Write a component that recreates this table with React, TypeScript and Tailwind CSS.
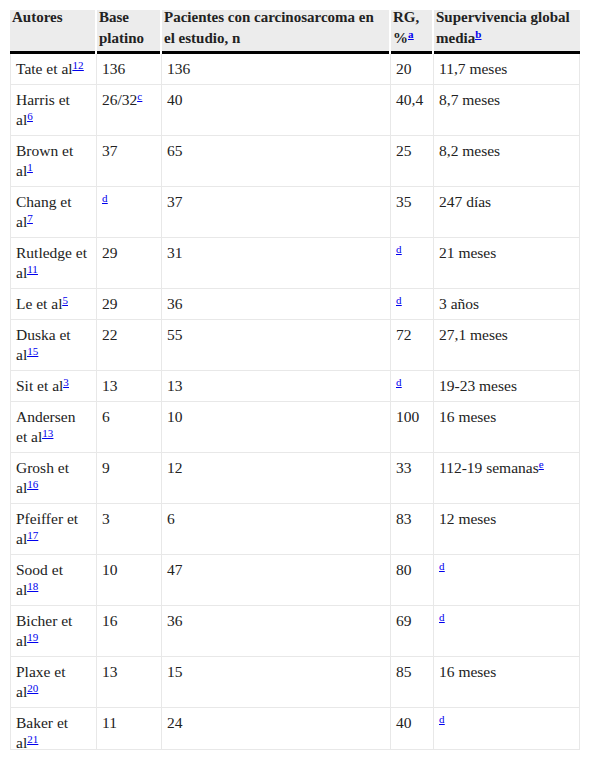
type Row = {
  name: string;
  wrap: "al" | "et" | null;
  cite: string;
  base: string;
  baseNote?: string;
  pacientes: string;
  rg: string;
  rgNote?: string;
  sv: string;
  svNote?: string;
};

const rows: Row[] = [
  { name: "Tate", wrap: null, cite: "12", base: "136", pacientes: "136", rg: "20", sv: "11,7 meses" },
  { name: "Harris", wrap: "al", cite: "6", base: "26/32", baseNote: "c", pacientes: "40", rg: "40,4", sv: "8,7 meses" },
  { name: "Brown", wrap: "al", cite: "1", base: "37", pacientes: "65", rg: "25", sv: "8,2 meses" },
  { name: "Chang", wrap: "al", cite: "7", base: "", baseNote: "d", pacientes: "37", rg: "35", sv: "247 días" },
  { name: "Rutledge", wrap: "al", cite: "11", base: "29", pacientes: "31", rg: "", rgNote: "d", sv: "21 meses" },
  { name: "Le", wrap: null, cite: "5", base: "29", pacientes: "36", rg: "", rgNote: "d", sv: "3 años" },
  { name: "Duska", wrap: "al", cite: "15", base: "22", pacientes: "55", rg: "72", sv: "27,1 meses" },
  { name: "Sit", wrap: null, cite: "3", base: "13", pacientes: "13", rg: "", rgNote: "d", sv: "19-23 meses" },
  { name: "Andersen", wrap: "et", cite: "13", base: "6", pacientes: "10", rg: "100", sv: "16 meses" },
  { name: "Grosh", wrap: "al", cite: "16", base: "9", pacientes: "12", rg: "33", sv: "112-19 semanas", svNote: "e" },
  { name: "Pfeiffer", wrap: "al", cite: "17", base: "3", pacientes: "6", rg: "83", sv: "12 meses" },
  { name: "Sood", wrap: "al", cite: "18", base: "10", pacientes: "47", rg: "80", sv: "", svNote: "d" },
  { name: "Bicher", wrap: "al", cite: "19", base: "16", pacientes: "36", rg: "69", sv: "", svNote: "d" },
  { name: "Plaxe", wrap: "al", cite: "20", base: "13", pacientes: "15", rg: "85", sv: "16 meses" },
  { name: "Baker", wrap: "al", cite: "21", base: "11", pacientes: "24", rg: "40", sv: "", svNote: "d" },
];

function Note({ children }: { children: string }) {
  return (
    <sup className="text-[11px] text-[#0000ee] underline underline-offset-1">
      <a href="#">{children}</a>
    </sup>
  );
}

function Author({ row }: { row: Row }) {
  if (row.wrap === "et") {
    return (
      <>
        {row.name}
        <br />
        et al<Note>{row.cite}</Note>
      </>
    );
  }
  if (row.wrap === "al") {
    return (
      <>
        {row.name} et
        <br />
        al<Note>{row.cite}</Note>
      </>
    );
  }
  return (
    <>
      {row.name} et al<Note>{row.cite}</Note>
    </>
  );
}

// header cells: grey band, black rule drawn inside so the white column gaps cut it
const th =
  "h-[44px] bg-[#ececec] px-[2px] pt-0 pb-[3px] text-left align-top font-bold shadow-[inset_0_-3px_0_#000]";
const td = "border-r border-b border-[#e8e8e8] px-[5px] py-[5px] align-top text-[15.5px]";

export default function App() {
  return (
    <div className="min-h-screen bg-white font-serif text-[15px] leading-5 text-[#222]">
      <div className="ml-[10px] mt-[10px] h-[740px] w-[570px] overflow-hidden border-b border-[#e8e8e8]">
        <table className="w-full table-fixed border-separate border-spacing-0 font-[Liberation_Serif,Times_New_Roman,serif] text-[15px] leading-5">
          <colgroup>
            <col className="w-[87px]" />
            <col className="w-[65px]" />
            <col className="w-[229px]" />
            <col className="w-[43px]" />
            <col className="w-[146px]" />
          </colgroup>
          <thead>
            <tr>
              <th className={`${th} border-r-2 border-white`}>
                <div className="-mt-[3px] leading-[21px]">Autores</div>
              </th>
              <th className={`${th} border-r-2 border-white`}>
                <div className="-mt-[3px] leading-[21px]">
                  Base
                  <br />
                  platino
                </div>
              </th>
              <th className={`${th} border-r-2 border-white`}>
                <div className="-mt-[3px] leading-[21px]">
                  Pacientes con carcinosarcoma en
                  <br />
                  el estudio, n
                </div>
              </th>
              <th className={`${th} border-r-2 border-white`}>
                <div className="-mt-[3px] leading-[21px]">
                  RG,
                  <br />
                  %<Note>a</Note>
                </div>
              </th>
              <th className={th}>
                <div className="-mt-[3px] leading-[21px]">
                  Supervivencia global
                  <br />
                  media<Note>b</Note>
                </div>
              </th>
            </tr>
          </thead>
          <tbody>
            {rows.map((row) => (
              <tr key={row.name}>
                <td className={`${td} border-l`}>
                  <Author row={row} />
                </td>
                <td className={td}>
                  {row.base}
                  {row.baseNote && <Note>{row.baseNote}</Note>}
                </td>
                <td className={td}>{row.pacientes}</td>
                <td className={td}>
                  {row.rg}
                  {row.rgNote && <Note>{row.rgNote}</Note>}
                </td>
                <td className={td}>
                  {row.sv}
                  {row.svNote && <Note>{row.svNote}</Note>}
                </td>
              </tr>
            ))}
          </tbody>
        </table>
      </div>
    </div>
  );
}
